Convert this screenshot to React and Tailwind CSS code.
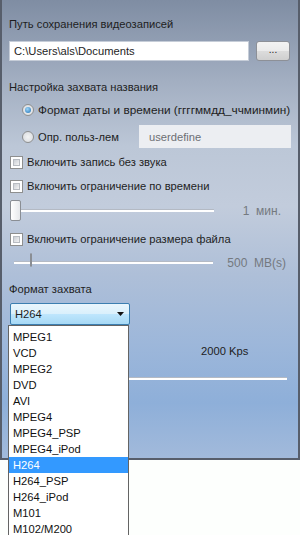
import React from "react";

const formats = [
  "MPEG1",
  "VCD",
  "MPEG2",
  "DVD",
  "AVI",
  "MPEG4",
  "MPEG4_PSP",
  "MPEG4_iPod",
  "H264",
  "H264_PSP",
  "H264_iPod",
  "M101",
  "M102/M200",
];

const Checkbox = ({ label }) => (
  <div className="flex items-center h-4">
    <span className="w-[13px] h-[13px] border border-[#8e8f8f] bg-white p-[2px] ml-[1px]">
      <span className="block w-full h-full bg-[linear-gradient(135deg,#cbcfd5,#f4f4f4)] border border-[#b8bcc2]" />
    </span>
    <span className="ml-[4px]">{label}</span>
  </div>
);

const Radio = ({ checked }) => (
  <span className="w-[12px] h-[12px] rounded-full border border-[#8e8f8f] bg-[radial-gradient(circle,#f4f4f4,#d5d8dd)] flex items-center justify-center shrink-0">
    {checked && (
      <span className="w-[6px] h-[6px] rounded-full bg-[radial-gradient(circle_at_40%_35%,#9fd6f8,#1b6fb5)]" />
    )}
  </span>
);

const Thumb = () => (
  <span className="w-[11px] h-[21px] border border-[#8a8e94] rounded-[2px] bg-[linear-gradient(90deg,#ffffff,#e6e8eb)] shrink-0 relative z-10" />
);

const Track = ({ className }) => (
  <span className={"h-[3px] border-t border-[#b4bac4] bg-white " + className} />
);

const App = () => {
  return (
    <div className="w-[300px] h-[535px] bg-[#fdfffd] relative overflow-hidden text-[11.2px] leading-4 text-[#1e1e1e] font-['Liberation_Sans',Arial,sans-serif]">
      {/* main panel */}
      <div className="h-[460px] border-x-2 border-b-2 border-[#575e6b] bg-[linear-gradient(180deg,#7f8da3_0%,#a3afc2_18%,#bcc7d7_32%,#c2ccdc_45%,#aebfd8_60%,#9db7da_75%,#8eafd9_88%,#a2badb_100%)] px-[7px] pt-[16px]">
        <div>Путь сохранения видеозаписей</div>

        <div className="flex mt-[9px] h-[20px]">
          <div className="w-[240px] bg-white border border-[#c6cdd8] px-[4px] flex items-center">
            C:\Users\als\Documents
          </div>
          <button className="ml-[7px] w-[34px] h-[20px] rounded-[3px] border border-[#8d9097] bg-[linear-gradient(180deg,#f3f3f3_0%,#ebebeb_50%,#dcdcdc_51%,#cfcfcf_100%)] flex items-center justify-center text-[10px] leading-none pb-[3px]">
            ...
          </button>
        </div>

        <div className="mt-[18px]">Настройка захвата названия</div>

        <div className="flex items-center mt-[7px] h-4 pl-[13px] whitespace-nowrap">
          <Radio checked />
          <span className="ml-[4px] text-[11.8px]">Формат даты и времени (ггггммдд_ччминмин)</span>
        </div>

        <div className="flex items-center mt-[7px] h-[23px] pl-[13px]">
          <Radio />
          <span className="ml-[4px]">Опр. польз-лем</span>
          <div className="ml-auto w-[152px] h-[23px] bg-[#eceef2] text-[#6c6f74] px-[10px] flex items-center">
            userdefine
          </div>
        </div>

        <div className="mt-[6px]">
          <Checkbox label="Включить запись без звука" />
        </div>
        <div className="mt-[8px]">
          <Checkbox label="Включить ограничение по времени" />
        </div>

        <div className="flex items-center mt-[6px] h-[21px] pl-[1px]">
          <Thumb />
          <Track className="w-[193px]" />
          <span className="ml-auto mr-[10px] text-[#74797f] text-[12px]">1&nbsp;&nbsp;мин.</span>
        </div>

        <div className="mt-[10px]">
          <Checkbox label="Включить ограничение размера файла" />
        </div>

        <div className="flex items-center mt-[5px] h-[21px] pl-[5px] relative">
          <Track className="w-[199px]" />
          <span className="absolute left-[21px] top-0">
            <Thumb />
          </span>
          <span className="ml-auto mr-[5px] text-[#74797f] text-[12px]">500&nbsp;&nbsp;MB(s)</span>
        </div>

        <div className="mt-[8px]">Формат захвата</div>

        <div className="mt-[6px] w-[120px] h-[22px] ml-[1px] rounded-[2px] border border-[#3c7fb1] bg-[linear-gradient(180deg,#eaf6fd_0%,#d9f0fc_50%,#bee6fd_51%,#a7d9f5_100%)] flex items-center pl-[4px] pr-[5px]">
          <span>H264</span>
          <svg className="ml-auto" width="7" height="4" viewBox="0 0 7 4">
            <path d="M0 0h7L3.5 4z" fill="#111" />
          </svg>
        </div>

        <div className="flex mt-[18px] pl-[192px]">2000 Kps</div>
        <div className="flex mt-[18px]">
          <Track className="w-[278px]" />
        </div>
      </div>

      {/* open dropdown list */}
      <div className="absolute left-[8px] top-[325px] w-[121px] h-[220px] bg-white border border-[#646464] pt-[3px]">
        {formats.map((f) => (
          <div
            key={f}
            className={
              "h-4 leading-4 pl-[4px] " +
              (f === "H264" ? "bg-[#3399ff] text-white" : "text-[#111]")
            }
          >
            {f}
          </div>
        ))}
      </div>
    </div>
  );
};

export default App;
